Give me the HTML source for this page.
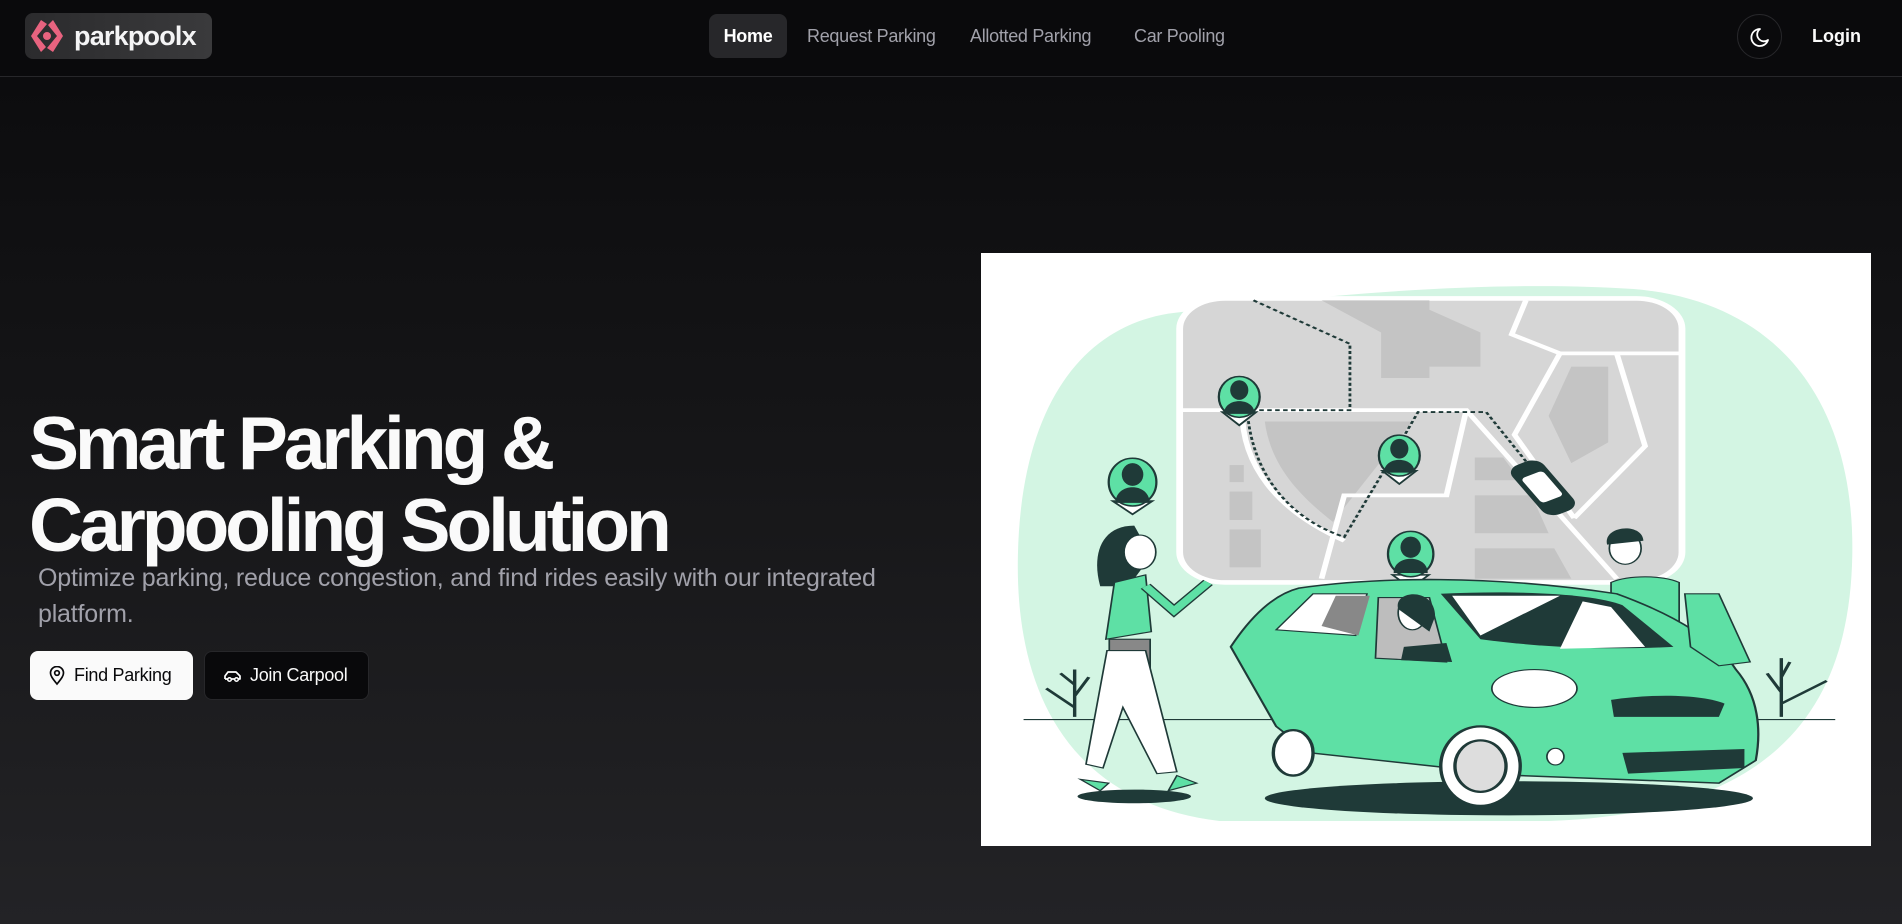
<!DOCTYPE html>
<html><head><meta charset="utf-8"><style>
*{margin:0;padding:0;box-sizing:border-box}
html,body{width:1902px;height:924px;overflow:hidden}
body{background:linear-gradient(180deg,#0a0a0c 0%,#151517 45%,#232326 100%);font-family:"Liberation Sans",sans-serif;color:#fafafa;position:relative}
header{position:absolute;left:0;top:0;width:1902px;height:77px;border-bottom:1px solid #27272a;background:#0a0a0c}
.logo{position:absolute;left:25px;top:13px;width:187px;height:46px;border-radius:8px;background:linear-gradient(90deg,#2b2b2d,#3a3a3c)}
.logo span{position:absolute;left:49px;top:8px;font-size:27px;font-weight:bold;letter-spacing:-0.8px;color:#f4f4f5}
.nav a{position:absolute;top:14px;height:44px;line-height:44px;font-size:18px;color:#a1a1aa;text-decoration:none;letter-spacing:-0.3px}
.nav .home{left:709px;width:78px;text-align:center;background:#27272a;border-radius:8px;color:#fff;font-weight:bold}
.moon{position:absolute;left:1737px;top:14px;width:45px;height:45px;border:1px solid #27272a;border-radius:50%}
.login{position:absolute;left:1812px;top:26px;font-size:18px;font-weight:bold}
h1{position:absolute;left:29px;top:402px;font-size:75px;line-height:82px;font-weight:bold;letter-spacing:-4.1px;color:#fafafa}
p.sub{position:absolute;left:38px;top:560px;width:880px;font-size:25px;line-height:36px;color:#a1a1aa;letter-spacing:-0.2px}
.btn{position:absolute;top:651px;height:49px;border-radius:8px;font-size:18px;line-height:49px;letter-spacing:-0.3px}
.b1{left:30px;width:163px;background:#fafafa;color:#09090b;padding-left:44px}
.b2{left:204px;width:165px;background:#09090b;border:1px solid #27272a;color:#fafafa;padding-left:45px;line-height:47px}
.btn svg{position:absolute;left:18px;top:15px}
.pic{position:absolute;left:981px;top:253px;width:890px;height:593px;background:#fff}
</style></head><body>
<header>
<div class="logo"><svg width="40" height="40" viewBox="0 0 40 40" style="position:absolute;left:2px;top:3px"><g fill="#e8637f"><path d="M14 4 L20 8 L10 20 L19 31 L14 36 L4 20 Z"/><path d="M26 36 L20 32 L30 20 L21 9 L26 4 L36 20 Z"/><circle cx="20" cy="20" r="4"/></g></svg><span>parkpoolx</span></div>
<div class="nav"><a class="home">Home</a><a style="left:807px">Request Parking</a><a style="left:970px">Allotted Parking</a><a style="left:1134px">Car Pooling</a></div>
<div class="moon"><svg width="45" height="45" viewBox="0 0 45 45"><path d="M22 14 A8.5 8.5 0 1 0 30 25 A6.5 6.5 0 0 1 22 14Z" fill="none" stroke="#fff" stroke-width="1.8" stroke-linejoin="round"/></svg></div>
<div class="login">Login</div>
</header>
<h1>Smart Parking &amp;<br>Carpooling Solution</h1>
<p class="sub">Optimize parking, reduce congestion, and find rides easily with our integrated platform.</p>
<div class="btn b1"><svg width="18" height="20" viewBox="0 0 18 20"><path d="M9 18 C4 12 2.5 9.5 2.5 7 A6.5 6.5 0 0 1 15.5 7 C15.5 9.5 14 12 9 18Z" fill="none" stroke="#09090b" stroke-width="1.7"/><circle cx="9" cy="7" r="2.3" fill="none" stroke="#09090b" stroke-width="1.7"/></svg>Find Parking</div>
<div class="btn b2"><svg width="20" height="18" viewBox="0 0 20 18"><path d="M2 12 V9 L5 5 H13 L17 9 V12 H15 M5 12 H2 M8 12 H12" fill="none" stroke="#fff" stroke-width="1.7" stroke-linejoin="round"/><circle cx="6.5" cy="12.5" r="1.8" fill="none" stroke="#fff" stroke-width="1.5"/><circle cx="13.5" cy="12.5" r="1.8" fill="none" stroke="#fff" stroke-width="1.5"/></svg>Join Carpool</div>
<div class="pic"><svg width="890" height="593" viewBox="0 0 1568 1566" preserveAspectRatio="none">
<path d="M330 160 C600 110 900 70 1150 95 C1420 130 1540 420 1535 800 C1530 1200 1400 1480 1000 1500 L420 1500 C150 1450 60 1150 65 800 C70 420 170 200 330 160Z" fill="#d3f5e3"/>
<rect x="350" y="120" width="885" height="750" rx="80" fill="#d6d6d6" stroke="#fff" stroke-width="12"/>
<g fill="#c4c4c4"><path d="M600 125 H790 V150 L880 210 V300 H790 V330 H705 V210 Z"/><path d="M500 445 H760 L620 710 C560 640 510 560 500 445Z"/><path d="M1040 300 H1105 V500 L1040 555 L1000 430 Z"/><rect x="438" y="560" width="25" height="45"/><rect x="438" y="630" width="40" height="75"/><rect x="438" y="730" width="55" height="100"/><path d="M870 540 H920 L950 600 H870Z"/><path d="M870 640 H970 L1000 740 H870Z"/><path d="M870 780 H1010 L1040 860 H870Z"/></g>
<g stroke="#fff" stroke-width="10" fill="none"><path d="M350 415 H855 L1120 860"/><path d="M855 415 L820 640 H640 L600 860"/><path d="M960 125 L935 215 L1020 265 H1230"/><path d="M1020 265 L940 480 L1045 700"/><path d="M1120 265 L1170 510 L1045 700"/><path d="M460 415 C460 560 520 680 640 760"/></g>
<g stroke="#1f3a38" stroke-width="5" stroke-dasharray="8 6" fill="none"><path d="M480 125 L650 240 V415 H490"/><path d="M470 430 C480 580 540 700 640 750 L700 600 L770 420 H890 L960 550"/></g>
<g transform="rotate(-30 990 620)"><rect x="958" y="545" width="64" height="150" rx="24" fill="#1f3a38"/><rect x="968" y="580" width="44" height="75" rx="8" fill="#fff"/></g>
<g stroke="#1f3a38" stroke-width="4"><path d="M425 420 L455 455 L485 420Z" fill="#fff"/><path d="M707 575 L737 610 L767 575Z" fill="#fff"/><path d="M232 655 L267 690 L302 655Z" fill="#fff"/><path d="M725 850 L757 885 L789 850Z" fill="#fff"/></g>
<g fill="#5ee0a5" stroke="#1f3a38" stroke-width="4"><ellipse cx="455" cy="380" rx="36" ry="54"/><ellipse cx="737" cy="535" rx="36" ry="54"/><ellipse cx="267" cy="605" rx="42" ry="63"/><ellipse cx="757" cy="795" rx="40" ry="60"/></g>
<g fill="#1f3a38"><ellipse cx="455" cy="362" rx="16" ry="26"/><path d="M428 425 C428 380 482 380 482 425Z"/><ellipse cx="737" cy="517" rx="16" ry="26"/><path d="M710 580 C710 535 764 535 764 580Z"/><ellipse cx="267" cy="585" rx="19" ry="30"/><path d="M237 660 C237 605 297 605 297 660Z"/><ellipse cx="757" cy="777" rx="18" ry="28"/><path d="M727 845 C727 795 787 795 787 845Z"/></g>
<path d="M75 1232 H1505" stroke="#1f3a38" stroke-width="3"/>
<ellipse cx="930" cy="1440" rx="430" ry="45" fill="#1f3a38"/>
<ellipse cx="270" cy="1435" rx="100" ry="18" fill="#1f3a38"/>
<path d="M1110 870 L1110 1000 L1230 1010 L1230 870 C1200 850 1140 850 1110 870Z" fill="#5ee0a5" stroke="#1f3a38" stroke-width="3"/>
<ellipse cx="1135" cy="780" rx="28" ry="42" fill="#fff" stroke="#1f3a38" stroke-width="3"/><path d="M1103 770 C1095 720 1165 710 1167 760Z" fill="#1f3a38"/>
<path d="M560 885 C700 855 900 850 1120 900 C1230 960 1300 1030 1330 1100 C1370 1170 1375 1260 1365 1340 L1300 1400 L950 1380 L580 1320 L520 1250 L440 1040 C480 950 520 900 560 885Z" fill="#5ee0a5" stroke="#1f3a38" stroke-width="4"/>
<path d="M1240 900 H1300 L1355 1080 L1300 1090 L1250 1040Z" fill="#5ee0a5" stroke="#1f3a38" stroke-width="3"/>
<path d="M810 900 C950 890 1080 900 1130 930 L1220 1040 C1100 1050 980 1040 880 1020Z" fill="#1f3a38"/>
<path d="M830 905 L1020 905 L880 1010Z" fill="#fff"/><path d="M1060 920 L1110 935 L1170 1040 L1020 1045Z" fill="#fff"/>
<path d="M520 995 L585 900 H680 L660 1010Z" fill="#fff" stroke="#1f3a38" stroke-width="3"/>
<path d="M600 985 L625 905 H685 L665 1010Z" fill="#888"/>
<path d="M700 910 H790 L820 1080 L695 1070Z" fill="#bdbdbd" stroke="#1f3a38" stroke-width="3"/>
<ellipse cx="760" cy="950" rx="25" ry="45" fill="#fff" stroke="#1f3a38" stroke-width="3"/>
<path d="M735 940 C725 890 800 880 800 960 L790 1000Z" fill="#1f3a38"/>
<path d="M745 1040 L820 1030 L830 1080 L740 1075Z" fill="#1f3a38"/>
<ellipse cx="975" cy="1150" rx="75" ry="50" fill="#fff" stroke="#1f3a38" stroke-width="3"/>
<path d="M1110 1180 C1200 1160 1280 1170 1310 1190 L1300 1225 L1115 1225Z" fill="#1f3a38"/>
<path d="M1130 1320 L1345 1310 L1345 1360 L1140 1375Z" fill="#1f3a38"/>
<ellipse cx="1012" cy="1330" rx="15" ry="22" fill="#fff" stroke="#1f3a38" stroke-width="3"/>
<g stroke="#1f3a38" stroke-width="6"><ellipse cx="880" cy="1355" rx="70" ry="105" fill="#fff"/><ellipse cx="880" cy="1355" rx="45" ry="68" fill="#ddd"/><ellipse cx="550" cy="1320" rx="35" ry="60" fill="#fff"/></g>
<path d="M270 720 C210 720 195 800 210 880 L260 880 L300 800Z" fill="#1f3a38"/>
<ellipse cx="280" cy="790" rx="28" ry="45" fill="#fff" stroke="#1f3a38" stroke-width="3"/>
<path d="M235 870 L290 850 L300 1000 L220 1020Z" fill="#5ee0a5" stroke="#1f3a38" stroke-width="3"/>
<path d="M290 880 L340 945 L400 870" fill="none" stroke="#1f3a38" stroke-width="22"/><path d="M290 880 L340 945 L400 870" fill="none" stroke="#5ee0a5" stroke-width="16"/>
<rect x="226" y="1020" width="72" height="75" fill="#888" stroke="#1f3a38" stroke-width="3"/>
<path d="M222 1050 L290 1050 L345 1370 L310 1375 L250 1200 L215 1360 L185 1350 Z" fill="#fff" stroke="#1f3a38" stroke-width="3"/>
<path d="M175 1390 L210 1420 L225 1400Z M330 1420 L380 1400 L345 1380Z" fill="#5ee0a5" stroke="#1f3a38" stroke-width="3"/>
<g stroke="#1f3a38" stroke-width="6" fill="none"><path d="M165 1225 V1100 M165 1200 L115 1150 M165 1170 L190 1120 M165 1140 L140 1110"/><path d="M1410 1225 V1070 M1410 1190 L1490 1130 M1410 1160 L1385 1110 M1410 1120 L1425 1080"/></g>
</svg></div>
</body></html>
